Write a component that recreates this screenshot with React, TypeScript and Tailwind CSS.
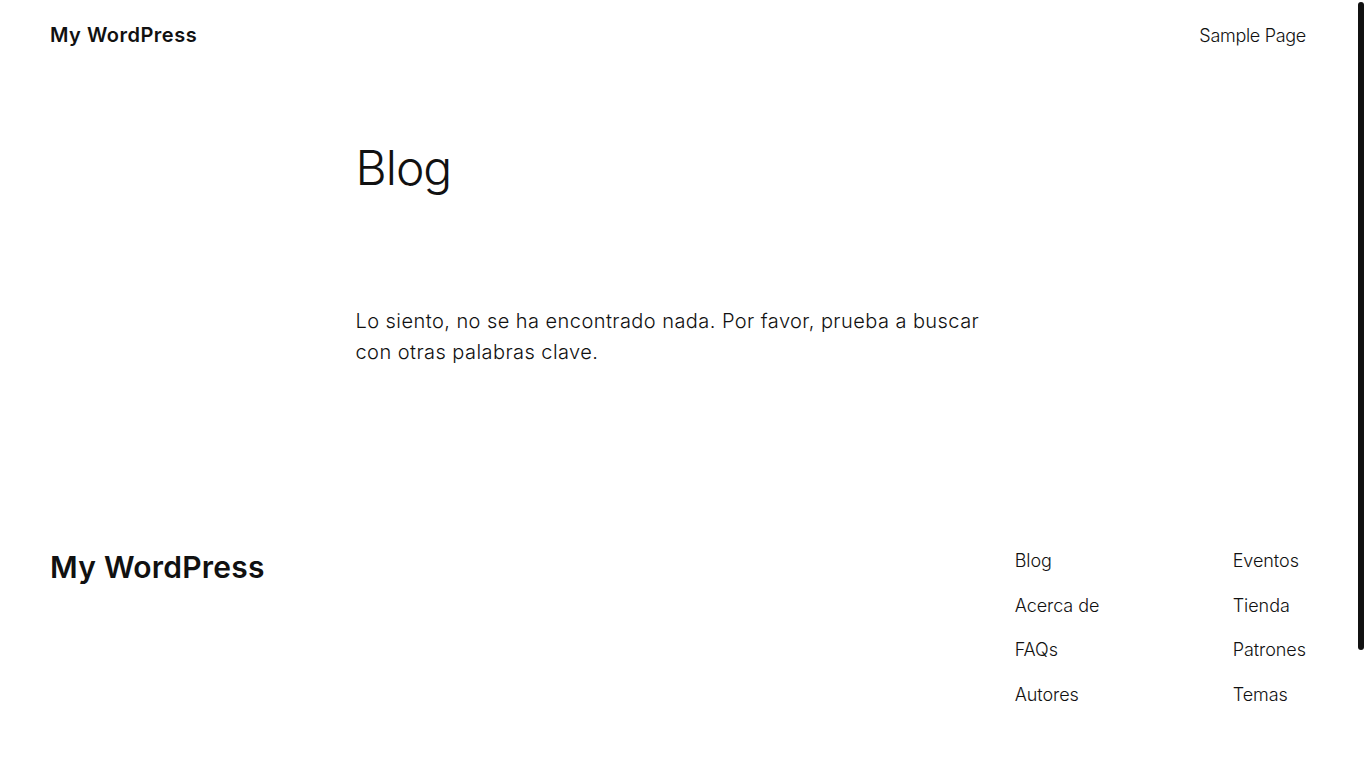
import React from "react";

const font = { fontFamily: '"Inter", "Noto Sans", sans-serif' };

export default function App() {
  return (
    <div className="flex w-full h-screen overflow-hidden bg-white text-[#111111]" style={font}>
      <div className="w-[1356px] h-full shrink-0">
        <header className="h-[70px] px-[50px] flex items-center justify-between">
          <div className="text-[20px] font-semibold tracking-[0.5px]">My WordPress</div>
          <nav className="text-[18px] font-light tracking-[-0.3px]">Sample Page</nav>
        </header>
        <main className="w-[645px] mx-auto pt-[69px]">
          <h1 className="text-[48px] leading-[58px] font-light tracking-[-1px]">Blog</h1>
          <p className="mt-[109px] text-[20px] leading-[31px] font-light tracking-[0.44px]">
            Lo siento, no se ha encontrado nada. Por favor, prueba a buscar con otras palabras clave.
          </p>
        </main>
        <footer className="mt-[179px] px-[50px] flex items-start justify-between">
          <div className="mt-[2px] text-[30px] leading-[36px] font-semibold tracking-[0.25px]">My WordPress</div>
          <nav className="flex text-[18px] leading-[27px] font-light tracking-[-0.05px]">
            <ul className="w-[218px] flex flex-col gap-[17.5px]">
              <li>Blog</li>
              <li>Acerca de</li>
              <li>FAQs</li>
              <li>Autores</li>
            </ul>
            <ul className="flex flex-col gap-[17.5px]">
              <li>Eventos</li>
              <li>Tienda</li>
              <li>Patrones</li>
              <li>Temas</li>
            </ul>
          </nav>
        </footer>
      </div>
      <div className="w-[10px] shrink-0 pt-[2px] pl-[2px]">
        <div className="w-[6px] h-[648px] rounded-full bg-[#111111]" />
      </div>
    </div>
  );
}
